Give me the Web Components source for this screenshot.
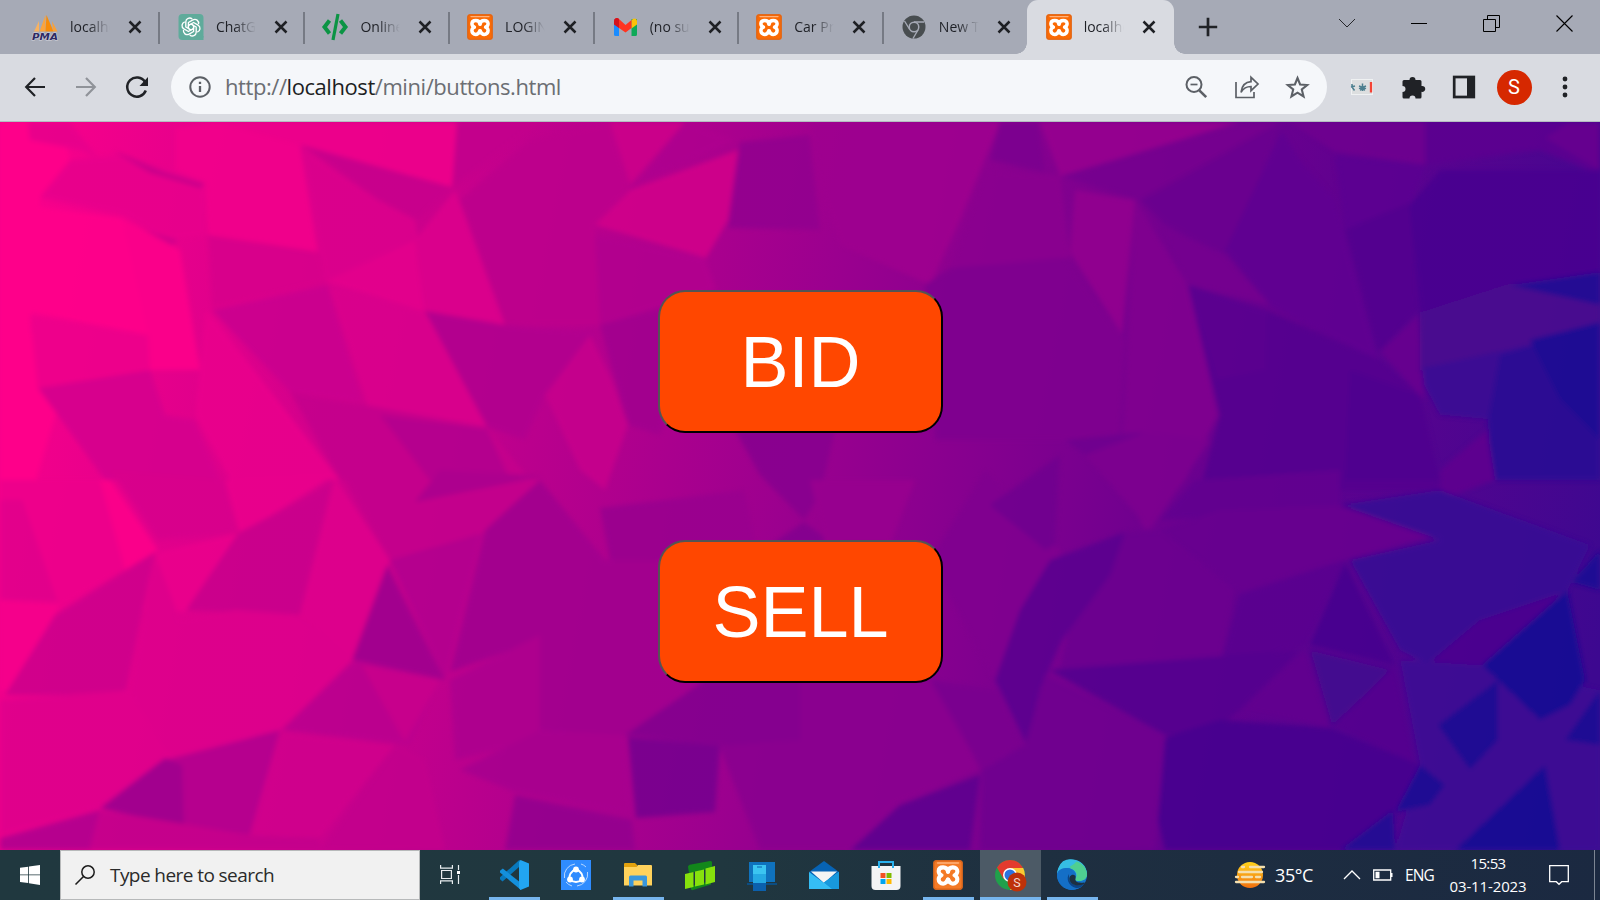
<!DOCTYPE html>
<html lang="en">
<head>
<meta charset="utf-8">
<title>Buttons</title>
<style>
html,body{margin:0;height:100%;overflow:hidden}
body{font-family:"Open Sans","Noto Sans",sans-serif}
</style>
</head>
<body>
<desktop-screen></desktop-screen>
<script>
const define = (name, html, ready) => customElements.define(name, class extends HTMLElement {
  connectedCallback() {
    if (this.shadowRoot) return;
    this.attachShadow({mode: 'open'}).innerHTML = typeof html === 'function' ? html(this) : html;
    if (ready) ready(this);
  }
});

/* Icons: name -> [viewBox size, markup] */
const xampp = `<rect x=".3" y=".3" width="25.4" height="25.4" rx="2.5" fill="#fb6a04"/><rect x=".8" y=".8" width="24.4" height="24.4" rx="2.2" fill="none" stroke="#d9641b"/><path d="M4 2.6h18" stroke="#ffb27c" stroke-width="1.4" stroke-linecap="round"/><path d="M13 10.300C12.600 7.500 11.200 6.400 8.800 6.400 6.300 6.400 4.900 7.800 4.900 9.800c0 1.700.9 2.700 2.500 3.400C5.600 14 4.900 15.200 4.900 16.600c0 2.200 1.500 3.900 3.900 3.900 2.200 0 3.200-1.500 4.200-3.700 1 2.200 2 3.700 4.200 3.700 2.400 0 3.900-1.700 3.900-3.900 0-1.400-.7-2.600-2.500-3.400 1.600-.7 2.500-1.700 2.500-3.400 0-2-1.400-3.400-3.900-3.400-2.400 0-3.800 1.100-4.200 3.900z" fill="none" stroke="#fff" stroke-width="3.500" stroke-linejoin="round"/><path d="M13 10v1.300M13 15.500V18" stroke="#fff" stroke-width="3"/>`;
const ICONS = {
  pma: [26, `<path d="M2 17.500L7 7v10.500z" fill="#f9b25f"/><path d="M7.500 17.500L13.500 1v16.500z" fill="#fba43d"/><path d="M14.500 1l7 16.500h-8z" fill="#f78c0a"/><path d="M20 7l5.500 10.500H21z" fill="#f9a13a"/><text x="0" y="25.600" font-family="DejaVu Sans" font-style="italic" font-weight="bold" font-size="9.300" textLength="26" lengthAdjust="spacingAndGlyphs" fill="#2e2a63" stroke="#d5d5de" stroke-width="1" paint-order="stroke">PMA</text>`],
  gpt: [26, `<rect x=".5" width="25" height="26" rx="4" fill="#5fab9b"/><path d="M21 26v-4h4.500v4z" fill="#5fab9b"/><g fill="none" stroke="#fff" stroke-width="1.350" stroke-linejoin="round">${[0,60,120,180,240,300].map(a=>`<path transform="rotate(${a} 13 13)" d="M10.400 14.500V8.500l4.500-2.600c3-1.600 6.300.9 5.600 4.200M10.400 11.500L13 10"/>`).join('')}</g>`],
  code: [26, `<g fill="none" stroke="#0b9444" stroke-width="4"><path d="M7.500 6.500L2.500 13l5 6.500M18.500 6.500l5 6.500-5 6.500"/><path d="M16 0L11 26" stroke-width="3.200"/></g>`],
  xampp: [26, xampp],
  gmail: [26, `<path d="M2 5h5v17H3.500A1.500 1.500 0 0 1 2 20.500z" fill="#1a8cff"/><path d="M19.500 5H25v15.500a1.500 1.500 0 0 1-1.500 1.500h-4z" fill="#0fa958"/><path d="M19.500 6.500C22 3 25 4.500 25 7.500v3l-5.500 4z" fill="#ffc107"/><path d="M2 8v-.5C2 4 5 3 7.500 5.500L13.500 11l6-5v8L13.500 18.500 7 14V14z" fill="#ff3420"/><path d="M2 7.500C2 4.500 5 3 7 5v9l-5-3.500z" fill="#d5121b"/>`],
  chromegray: [26, `<circle cx="13" cy="13" r="11.500" fill="#484d50"/><g stroke="#a6aab6" stroke-width="1.400" fill="none"><path d="M13 8h10M8.700 15.500L3.500 7M17.300 15.500L12 24.500"/></g><circle cx="13" cy="13" r="5.500" fill="#a6aab6"/><circle cx="13" cy="13" r="4" fill="#484d50"/>`],
  x: [14, `<path d="M1.500 1.500l11 11M12.500 1.500l-11 11" stroke="#1e2024" stroke-width="2.500"/>`],
  plus: [20, `<path d="M10 .8v18.400M.8 10h18.400" stroke="#202226" stroke-width="2.700"/>`],
  chev: [16, `<path d="M0 4l8 8 8-8" fill="none" stroke="#26272b" stroke-width="1"/>`],
  min: [16, `<path d="M0 8.500h16" stroke="#000" stroke-width="1"/>`],
  max: [17, `<path d="M.5 4.500h12v12H.5zM4.500 4.500v-4h12v12h-4" fill="none" stroke="#000"/>`],
  close: [17, `<path d="M.5.5l16 16M16.500.5l-16 16" stroke="#000" stroke-width="1.100"/>`],
  back: [20, `<path d="M20 10H1.500M10 1L1.200 10l8.800 9" fill="none" stroke="#202226" stroke-width="2.200"/>`],
  fwd: [20, `<path d="M0 10h18.500M10 1l8.800 9-8.800 9" fill="none" stroke="#909399" stroke-width="2.200"/>`],
  reload: [22, `<path d="M19.800 14.500A9.600 9.600 0 1 1 19 6" fill="none" stroke="#202226" stroke-width="2.500"/><path d="M22 1v9h-8.500z" fill="#202226"/>`],
  info: [22, `<circle cx="11" cy="11" r="9.700" fill="none" stroke="#5c6066" stroke-width="2"/><path d="M11 10v6M11 5.800v2.200" stroke="#5c6066" stroke-width="2.300"/>`],
  zoomout: [22, `<circle cx="9" cy="8.500" r="7.500" fill="none" stroke="#5c6066" stroke-width="2"/><path d="M14.300 14.300l6.900 6.900" stroke="#5c6066" stroke-width="2.600"/><path d="M5.500 8.500h7" stroke="#5c6066" stroke-width="1.700"/>`],
  share: [24, `<path d="M1 7v15.500h18V17" fill="none" stroke="#5c6066" stroke-width="1.700"/><path d="M6 17.300C7 10 10.500 7 16 6.700V2.300L23 9l-7 6.700v-4.200c-4.500 0-7.500 1.500-10 5.800z" fill="none" stroke="#5c6066" stroke-width="1.700"/>`],
  star: [22, `<path d="M11 1.900l2.500 6.200 6.800.5-5.200 4.300 1.700 6.700L11 16l-5.800 3.600 1.700-6.700L1.700 8.600l6.800-.5z" fill="none" stroke="#5c6066" stroke-width="2"/>`],
  ext: [22, `<rect x=".5" y="3.500" width="21" height="15" fill="#dcdedf" stroke="#eff1f2"/><g stroke="#4d7f8f" stroke-width="1.500"><path d="M11.500 7.500v7.500M8 10l7 2.600M15 10l-7 2.600M9.300 14.500l2.200-3.200 2.200 3.200M0 11l4-1M1 8v3l2.500 3.500" fill="none"/></g><path d="M20 6v10.500" stroke="#f44336" stroke-width="2.300"/>`],
  puzzle: [24, `<path d="M4 5h4.500a3 3 0 1 1 6 0H19q1.500 0 1.500 1.500V11a3 3 0 1 1 0 5.800V22q0 1.500-1.500 1.500h-4.500a3 3 0 0 0-6 0H3Q1.500 23.500 1.500 22v-5a3 3 0 0 0 0-6V6.500Q1.500 5 3 5z" fill="#202226"/>`],
  panel: [24, `<rect x="2.200" y="2" width="19.600" height="20" fill="none" stroke="#202226" stroke-width="2.700"/><path d="M15 2h7v20h-7z" fill="#202226"/>`],
  dots: [24, `<g fill="#202226"><circle cx="12" cy="4" r="2.400"/><circle cx="12" cy="12" r="2.400"/><circle cx="12" cy="20" r="2.400"/></g>`],
  win: [20, `<path d="M0 2.800L8.200 1.700v7.700H0zM9 1.600L20 0v9.400H9zM0 10.300h8.200V18L0 16.900zM9 10.300h11V20L9 18.200z" fill="#fff"/>`],
  search: [20, `<circle cx="13" cy="7" r="6.200" fill="none" stroke="#1c1c1c" stroke-width="1.500"/><path d="M8.500 11.500L.5 19.500" stroke="#1c1c1c" stroke-width="1.600"/>`],
  taskview: [20, `<g fill="none" stroke="#e8edef" stroke-width="1.200"><path d="M.6 0v3.200h11.800V0M.6 19v-3.200h11.800V19M1.600 5.500h9.800v8H1.600zM18.500 0v5M18.500 10v9"/></g><path d="M17 6h3v3h-3z" fill="#fff"/>`],
  vscode: [30, `<path d="M21 0l-1 7L3.500 21.500 1 19.300v-2L20 .3z" fill="#0879bd"/><path d="M1 10.700l2.800-2.200L22 23v7L1 12.500z" fill="#1490dc"/><path d="M21.500 0L30 3.500v23L21.500 30 20 28V2z" fill="#22a5f1"/>`],
  shareit: [30, `<path d="M0 0h30v30H0z" fill="#2f8cff"/><g fill="none" stroke="#b9d8ff" stroke-width="1"><path d="M3.500 18A12 12 0 0 1 14 4M26.500 12A12 12 0 0 1 16 26M5 22a12 12 0 0 0 6 4M25 7a12 12 0 0 0-5-3"/></g><path d="M15 9c-6 3-7 6-6.500 10.500C13 23 17 23 21.500 19.500 22 15 21 12 15 9z" fill="none" stroke="#fff" stroke-width="2"/><g fill="#fff"><circle cx="15" cy="9.500" r="2.900"/><circle cx="9" cy="19.500" r="2.900"/><circle cx="21" cy="19.500" r="2.900"/></g>`],
  folder: [30, `<path d="M1 4q0-1 1-1h10l2.500 2.500L13 9H1z" fill="#e2a10d"/><path d="M1 7h12.500l1.500-2h13q1 0 1 1v19.500H1z" fill="#ffd25c"/><path d="M6 26.500V17q0-1.500 1.500-1.500h15Q24 15.500 24 17v9.500h-4.500v-6h-9v6z" fill="#3a97dc"/>`],
  nox: [30, `<path d="M3 7Q3 5 6 4.500L25 1q2-.5 2 1.500v6L4 13zM6 26l20-5v3.500L8 30q-2 .5-2-1z" fill="#12871b"/><path d="M0 14l8.500-2v15L0 29zM10 11.500l9-2v15l-9 2zM20.500 8.500L30 6v16l-9.500 2.500z" fill="#86e10d"/>`],
  phone: [30, `<path d="M2 2h26v20H2z" fill="#0f72bd"/><path d="M0 25h30v-2H0z" fill="#0b4d82"/><path d="M6 5h13v22H6z" fill="#25a9e3"/><path d="M6 5h13v9H6z" fill="#3bc5f1"/><path d="M6 23h13v8H6z" fill="#0b60ad"/><path d="M10 7h5" stroke="#0b60ad"/>`],
  mail: [30, `<path d="M0 12L15 1l15 11v17H0z" fill="#0763b4"/><path d="M2 11.500h26L15 23z" fill="#f4f4f4"/><path d="M0 12l15 11L30 12v17H0z" fill="#35bdf4"/><path d="M15 22.500L30 12v17h-7z" fill="#169be0"/><path d="M15 22.500L23.500 29H30V12z" fill="#1898dc"/>`],
  store: [30, `<path d="M8 9V2h14v7" fill="none" stroke="#29b1ee" stroke-width="2"/><path d="M.5 6h29v20q0 4-4 4h-21q-4 0-4-4z" fill="#f4f4f5"/><path d="M8 6v2M22 6v2" stroke="#29b1ee" stroke-width="2"/><path d="M9.500 13h5v5h-5z" fill="#f25022"/><path d="M15.500 13h5v5h-5z" fill="#7fba00"/><path d="M9.500 19h5v5h-5z" fill="#00a4ef"/><path d="M15.500 19h5v5h-5z" fill="#ffb900"/>`],
  xampp30: [26, xampp.replace('#fb6a04','#f47a26')],
  chrome: [30, `<circle cx="15" cy="15" r="15" fill="#20a04b"/><path d="M15 15L2 7.500A15 15 0 0 1 28 7.500z" fill="#e33b2e"/><path d="M15 8h13.200A15 15 0 0 1 15 30l6.500-11.500z" fill="#fcc934"/><path d="M2 7.500L8.500 19 15 8z" fill="#e33b2e"/><circle cx="15" cy="15" r="7" fill="#fff"/><circle cx="15" cy="15" r="5.500" fill="#2b73e0"/><circle cx="22" cy="22" r="9.500" fill="#be3209"/><text x="22" y="26.500" text-anchor="middle" font-family="Roboto" font-size="12.500" fill="#f4d8cf">S</text>`],
  edge: [30, `<circle cx="15" cy="15" r="15" fill="#1576cc"/><path d="M0 15A15 15 0 0 1 30 14c0 5-4 7-8 7-3 0-4.500-1-3.500-2.500C21 15 18 8 11 8 5 8 1 11 0 15z" fill="#35b9e2"/><path d="M12 1A15 15 0 0 1 30 14c0 5-4 7-8 7-3 0-4.500-1-3.500-2.500 3-4 0-9-5-10z" fill="#4fcf91"/><path d="M6 1.200A15 15 0 0 1 20 1q-5 6-13 7-4 1-6 4a15 15 0 0 1 5-10.800z" fill="#36bde3"/><path d="M0 15c0-4 4-7 9-7 6 0 9.500 5 9.500 8-3-3-8 0-6 5 2 5 8 7 14 3.500A15 15 0 0 1 0 15z" fill="#146fc7"/><path d="M12 14c-3 4-1 12 7 14 3 .5 6-1 8-4-7 3-15 0-15-6z" fill="#0c4486"/><path d="M18.500 16c-3-3-7 0-6 4 1.500 5 8 7 14.500 4 1-.8 1-1.700 0-1.600-4 .8-9.500 0-8.500-3.600z" fill="#1d3041"/>`],
  sun: [30, `<defs><linearGradient id="s" x2="0" y2="1"><stop stop-color="#ffd21c"/><stop offset="1" stop-color="#f2700e"/></linearGradient></defs><circle cx="15" cy="15" r="13" fill="url(#s)"/><g stroke="#f4dfae" stroke-width="2.300" stroke-linecap="round"><path d="M7 7h2M15 7h14M4 12h23M7 17h10M21 17h4M1 22h28M1 17h2M10 22h14"/></g>`],
  caret: [16, `<path d="M0 12l8-8 8 8" fill="none" stroke="#fff" stroke-width="1.300"/>`],
  battery: [20, `<path d="M.7 5h17v10H.7z" fill="none" stroke="#fff" stroke-width="1.300"/><path d="M18 8h1.500v4H18zM2.500 6.700h4v6.600h-4z" fill="#fff"/>`],
  note: [20, `<path d="M.7.700h18.600v16h-6.600L10 19.300 7.300 16.700H.7z" fill="none" stroke="#fff" stroke-width="1.300"/>`]
};
define('ui-icon', el => {
  const [box, art] = ICONS[el.getAttribute('name')], s = el.getAttribute('size') || box;
  return `<style>:host{display:block;flex:none;width:${s}px;height:${s}px}svg{display:block;overflow:visible}</style><svg width="${s}" height="${s}" viewBox="0 0 ${box} ${box}">${art}</svg>`;
});

/* Text run whose letter spacing is adjusted to span a given width */
define('fit-text', `<style>:host{display:block;flex:none;white-space:pre}span{display:inline-block}</style><span><slot></slot></span>`, el => {
  const s = el.shadowRoot.querySelector('span');
  const n = el.textContent.length;
  s.style.letterSpacing = (el.getAttribute('width') - s.getBoundingClientRect().width) / n + 'px';
});

/* A slot of fixed width that centres its content */
define('icon-cell', el => `<style>:host{display:flex;flex:none;align-items:center;justify-content:center;width:${el.getAttribute('w')}px;height:100%}</style><slot></slot>`);

define('browser-tab', el => `<style>
:host{display:flex;box-sizing:border-box;flex:none;align-items:center;width:144.600px;height:54px;padding:0 0 0 17.500px;position:relative}
:host([first]){width:145.900px}
:host([last]){width:143.300px}
:host::after{content:"";position:absolute;right:-.5px;top:12px;width:2px;height:32px;background:#767a84}
:host([first])::after{right:.8px}
:host([last])::after,:host([active])::after{display:none}
.t{width:41px;margin-left:12px;overflow:hidden;white-space:nowrap;font-size:14px;line-height:20px;color:#1e2026;-webkit-mask:linear-gradient(90deg,#000 45%,transparent 97%)}
ui-icon+.t+ui-icon{margin-left:17px}
:host([active]){width:147px;padding-left:19px;background:#d9dbe1;border-radius:11px 11px 0 0}
:host([active]) .l,:host([active]) .r{position:absolute;bottom:0;width:11px;height:11px}
.l{left:-11px;background:radial-gradient(circle at 0 0,transparent 10.500px,#d9dbe1 11px)}
.r{right:-11px;background:radial-gradient(circle at 100% 0,transparent 10.500px,#d9dbe1 11px)}
</style><i class="l"></i><i class="r"></i><ui-icon name="${el.getAttribute('icon')}"></ui-icon><div class="t"><slot></slot></div><ui-icon name="x" size="14"></ui-icon>`);

define('tab-strip', `<style>
:host{display:flex;height:54px;background:#a6aab6;padding-left:14.500px;box-sizing:border-box}
.ctl{display:flex;margin-left:auto;height:46px}
</style>
<browser-tab icon="pma" first>localho</browser-tab><browser-tab icon="gpt">ChatGP</browser-tab><browser-tab icon="code">Online</browser-tab><browser-tab icon="xampp">LOGIN</browser-tab><browser-tab icon="gmail">(no sub</browser-tab><browser-tab icon="xampp">Car Pri</browser-tab><browser-tab icon="chromegray" last>New Ta</browser-tab><browser-tab icon="xampp" active>localho</browser-tab>
<icon-cell w="68"><ui-icon name="plus"></ui-icon></icon-cell>
<div class="ctl"><icon-cell w="73"><ui-icon name="chev"></ui-icon></icon-cell><icon-cell w="72"><ui-icon name="min"></ui-icon></icon-cell><icon-cell w="73"><ui-icon name="max"></ui-icon></icon-cell><icon-cell w="72"><ui-icon name="close"></ui-icon></icon-cell></div>`);

define('address-bar', `<style>
:host{display:flex;box-sizing:border-box;width:1156px;height:54px;border-radius:27px;background:#f5f7fa;align-items:center;padding:0 4px 0 3px}
fit-text{font-size:22px;line-height:30px;color:#6b6e73;margin:-2px auto 0 0}
b{font-weight:400;color:#1d1f23}
</style><icon-cell w="51"><ui-icon name="info"></ui-icon></icon-cell><fit-text width="336">http://<b>localhost</b>/mini/buttons.html</fit-text>
<icon-cell w="51"><ui-icon name="zoomout"></ui-icon></icon-cell><icon-cell w="51"><ui-icon name="share"></ui-icon></icon-cell><icon-cell w="51"><ui-icon name="star" size="23"></ui-icon></icon-cell>`);

define('tool-bar', `<style>
:host{display:flex;box-sizing:border-box;height:68px;background:#d9dbe1;border-bottom:1px solid #b4bcc0;padding:0 9px 1px;align-items:center}
.av{display:grid;place-items:center;width:35px;height:35px;border-radius:50%;background:#d62800;color:#fff;font:20px/35px Roboto,sans-serif}
address-bar{margin:0 9px 0 0}
</style>
<icon-cell w="51"><ui-icon name="back"></ui-icon></icon-cell><icon-cell w="51"><ui-icon name="fwd"></ui-icon></icon-cell><icon-cell w="51"><ui-icon name="reload"></ui-icon></icon-cell><span style="flex:none;width:9px"></span>
<address-bar></address-bar>
<icon-cell w="51"><ui-icon name="ext"></ui-icon></icon-cell><icon-cell w="51"><ui-icon name="puzzle"></ui-icon></icon-cell><icon-cell w="51"><ui-icon name="panel"></ui-icon></icon-cell><icon-cell w="50"><div class="av">S</div></icon-cell><icon-cell w="51"><ui-icon name="dots"></ui-icon></icon-cell>`);

/* Facets of the low-poly wallpaper: colour, then corner points */
const FACETS = `ff008a 0,122 60,122 70,160 40,197 30,330 60,400 0,600
e8008c 28,122 70,122 100,160 80,150 30,140
e8008c 40,197 70,160 120,155 175,170 205,182 205,235 165,240 125,215
f2008b 175,128 215,122 300,145 318,252 208,235 205,182 175,170
c8008c 112,150 165,172 205,184 200,188 150,173
d0008c 122,222 150,232 178,240 170,248 140,235
ee008b 215,122 457,122 452,187 300,145
c8008c 302,145 450,187 418,220 378,200
db008c 302,148 378,200 415,220 420,250 325,282 310,200
fc008a 122,218 180,250 200,370 150,370
ff008a 28,205 122,218 148,335 30,312
ee008b 30,315 148,335 150,370 38,388
e9008c 205,310 215,320 340,480 230,480 195,415
d8008b 208,235 318,252 325,282 212,308
cb008f 212,310 328,285 362,402 290,392
da008c 328,285 425,312 490,427 368,407
e4008c 325,282 415,240 425,312
dc008c 415,240 455,190 505,325 425,311
c3008c 457,122 540,122 452,188
bd008c 460,200 530,140 610,122 630,188 595,225 600,325 505,325
b2008f 425,311 505,325 598,332 545,395 525,440 487,427
c5008c 290,392 365,405 487,427 530,480 340,480
b4008f 380,415 487,429 510,480 430,480
d6008e 38,388 150,370 165,415 195,420 220,480 105,480
cc008a 610,122 685,122 630,185
ae008f 685,122 735,140 640,182
d0008a 595,225 630,190 738,150 728,220 706,258
93008f 740,142 810,135 820,230 728,228
9e008f 812,122 1000,122 960,220 930,285 840,245 820,190
b2008f 595,235 705,258 716,290 600,325
a2008f 600,325 700,296 660,435 628,425
c6008c 590,335 612,380 628,425 605,490 580,470 545,395
88008f 735,430 835,430 820,495 804,520 760,475
84008f 804,522 770,545 835,545
8a008f 985,170 1060,175 1070,258 950,270
7c008f 1000,122 1038,122 1045,172 990,160
7f008f 925,285 950,268 1065,258 1125,340 1120,434 1070,440 935,440
96008f 1040,122 1240,122 1060,176
76008f 1062,176 1240,124 1280,122 1140,200
92008f 1070,252 1075,190 1135,200 1122,335
80008f 1135,200 1188,285 1218,415 1185,480 1145,530 1120,480
6a008f 1140,200 1280,122 1260,180 1225,255 1165,225
74008f 1160,225 1225,255 1270,305 1188,285
600592 1282,130 1300,160 1335,200 1378,360 1270,305 1225,250
6e008f 1290,122 1430,122 1425,165 1335,152
5c0592 1335,155 1425,165 1410,205 1345,230
53008f 1345,230 1412,202 1418,310 1378,352
5c0590 1425,122 1600,122 1600,175 1540,150 1425,165
4a0590 1410,205 1440,170 1600,170 1600,272 1510,285 1420,315
68008f 1545,138 1570,122 1600,122 1600,170
55008f 1188,285 1268,311 1380,360 1420,395 1440,490 1200,490 1220,415
5a0590 1188,285 1268,311 1266,370 1217,380
50058f 1350,370 1420,395 1440,480 1345,480
67008f 1380,352 1418,315 1424,400
48078f 1420,312 1510,283 1600,303 1600,330 1530,345 1420,372
3a0894 1422,368 1530,345 1495,420 1440,415 1424,385
2c0a94 1500,355 1600,325 1600,480 1490,480 1488,420
200a94 1510,285 1600,272 1600,305
1e0a94 1530,340 1600,322 1600,440 1560,400
5f008f 1440,470 1487,430 1495,480 1440,500
70008f 1065,440 1145,432 1145,500 1085,455
98008f 810,480 915,480 890,545 825,545
80008f 985,470 1060,550 1045,680 1000,690 930,560
71008f 990,505 1060,455 1055,545 1045,550
7d008f 1085,455 1145,432 1210,440 1150,530
620590 1195,480 1340,470 1340,510 1160,520
68008f 1160,530 1220,510 1340,505 1440,535 1345,560 1240,592
6c008f 1125,532 1160,530 1235,590 1220,665 1060,670 1075,600
5c0590 1050,560 1125,532 1110,575 1062,640 1040,690 1027,745 995,680 1020,610
380a94 1340,505 1440,490 1590,545 1565,595 1480,665 1440,670 1400,650 1350,560 1440,540
4b058f 1480,620 1570,590 1480,670 1430,700 1420,670
5a0590 1240,595 1345,560 1305,645 1220,665
46058f 1345,563 1310,645 1395,665
54008f 1050,670 1300,650 1240,710 1225,722 1180,738 1165,735
62008f 1305,650 1330,728 1240,710
42078f 1310,650 1392,670 1332,726
54058f 1395,665 1415,765 1335,726
70008f 1045,675 1165,735 1155,850 980,850 982,770 1025,745
46058f 1165,738 1220,720 1330,728 1420,765 1395,810 1340,850 1165,850 1158,820
3e0894 1400,660 1480,665 1600,690 1600,850 1395,850 1420,765
180a94 1567,590 1585,680 1570,705 1540,720 1482,665
1c0a94 1498,680 1498,740 1470,770 1438,725
140a94 1545,765 1560,850 1455,850
1c0a94 1420,765 1445,785 1430,805 1395,812
200a94 1393,810 1395,850 1340,850
1c0a94 1572,582 1600,550 1600,590
1c0a94 1600,690 1565,740 1600,745
8a008f 800,680 935,680 980,770 895,805 850,850 760,850 720,748
7a008f 930,680 1000,690 1020,745 982,770
5f058f 980,775 970,850 850,850 900,805
ee008b 0,480 110,480 158,550 62,605 0,600
e2008c 0,500 22,500 58,602 0,600
fc008a 100,480 110,480 158,550 125,570
d8008c 110,470 225,480 236,533 158,540
ea008c 225,480 335,475 240,535
ca008c 238,533 330,485 300,615 235,612 185,610
df008c 335,478 390,560 352,662 300,615
ea008c 158,552 238,533 185,612 140,610
c4008c 345,480 540,480 480,535 390,560
ac008f 440,470 545,476 415,502
a0008f 387,565 445,680 352,660
b4008f 390,560 482,533 445,680
a2008f 485,530 540,480 605,560 660,560 700,680 628,737 540,730 540,640 450,672
ae008f 450,680 540,635 540,740 455,760
f6008b 0,600 60,605 10,690 0,690
cf008c 5,695 55,615 155,552 125,695
de008c 130,690 155,555 180,620 235,610 300,615 352,660 280,730 170,760
e0008c 0,700 130,690 170,755 100,808 0,835
bb008f 355,660 440,680 410,745 282,730
c8008c 362,665 440,680 405,742
b4008f 165,760 280,730 250,835 183,825
9e008f 100,808 165,758 182,765 184,828
d0008c 280,732 395,745 320,838 250,835
c3008c 395,745 425,760 445,850 320,850
a8008f 460,770 540,730 625,735 632,815 515,792
94008f 515,795 632,820 635,850 505,850
78008f 628,737 720,745 715,812 636,818
84008f 625,735 705,680 800,680 800,740 720,746
b3008f 0,838 100,810 90,850 0,850
c4008c 100,810 250,835 320,838 320,850 90,850
9a008f 600,508 745,490 758,560 610,560`.split('\n').map(r => {
  const i = r.indexOf(' ');
  return `<polygon fill="#${r.slice(0, i)}" points="${r.slice(i + 1)}"/>`;
}).join('');
define('poly-wallpaper', `<style>:host{display:block;position:absolute;inset:0;overflow:hidden;z-index:0}svg{display:block}</style>
<svg width="1600" height="728" viewBox="0 122 1600 728"><defs><linearGradient id="g" gradientUnits="userSpaceOnUse" x1="0" y1="330" x2="1600" y2="640"><stop stop-color="#f8008b"/><stop offset=".25" stop-color="#ca008c"/><stop offset=".5" stop-color="#9a008f"/><stop offset=".75" stop-color="#68008f"/><stop offset="1" stop-color="#3d0890"/></linearGradient><filter id="b" filterUnits="userSpaceOnUse" x="-20" y="100" width="1640" height="770"><feGaussianBlur stdDeviation="2.500"/></filter></defs>
<rect y="122" width="1600" height="728" fill="url(#g)"/><g filter="url(#b)" opacity=".93">${FACETS}</g></svg>`);

define('action-button', `<style>:host{display:block;width:285px;height:143px}
button{position:relative;display:block;box-sizing:border-box;width:100%;height:100%;margin:0;padding:0;background:#ff4700;color:#fff;border:2px solid;border-color:#545454 #000 #000 #545454;border-radius:27px;font:72px/1 "Liberation Sans",Arial,sans-serif}</style><button><slot></slot></button>`);

define('page-view', `<style>
:host{display:flex;box-sizing:border-box;position:relative;flex-direction:column;align-items:center;height:728px;padding:168px 0 0 1px;gap:107px}
action-button{position:relative}
</style><poly-wallpaper></poly-wallpaper><action-button>BID</action-button><action-button>SELL</action-button>`);

define('task-app', el => `<style>
:host{display:flex;box-sizing:border-box;flex:none;width:62px;height:50px;align-items:center;justify-content:center;position:relative}
:host([active]){background:linear-gradient(#4c5a66,#4c5a66) center/61px 100% no-repeat}
:host([open])::after{content:"";position:absolute;left:5.500px;right:5.500px;bottom:0;height:3px;background:#76b5ee}
:host([active])::after{left:.5px;right:.5px}
</style><ui-icon name="${el.getAttribute('icon')}" size="30"></ui-icon>`);

define('task-bar', `<style>
:host{display:flex;height:50px;background:linear-gradient(90deg,#20383f,#20373f 45%,#1e2f40 65%,#1b2941);align-items:center;color:#fff}
.s{display:flex;box-sizing:border-box;width:360px;height:50px;flex:none;align-items:center;border:1px solid #b7b9ba;background:#f1f1f1;padding-left:14px;color:#2a2a2a;font-size:19px}
.s fit-text{margin-left:15px}
.tv{margin:0 2px 0 -2px}
.w{width:38px;margin-left:10px;font-size:18px}
.e{width:30px;margin-left:12px;font-size:15.500px}
.clock{display:flex;flex-direction:column;align-items:center;width:78px;margin-left:14px;font-size:15px;line-height:23px;padding-bottom:1px}
.end{width:1px;height:50px;background:#7c8593;margin-left:25px}
</style>
<icon-cell w="60"><ui-icon name="win"></ui-icon></icon-cell>
<div class="s"><ui-icon name="search"></ui-icon><fit-text width="164">Type here to search</fit-text></div>
<icon-cell class="tv" w="63"><ui-icon name="taskview"></ui-icon></icon-cell>
<task-app icon="vscode" open></task-app><task-app icon="shareit"></task-app><task-app icon="folder" open></task-app><task-app icon="nox"></task-app><task-app icon="phone"></task-app><task-app icon="mail"></task-app><task-app icon="store"></task-app><task-app icon="xampp30" open></task-app><task-app icon="chrome" open active></task-app><task-app icon="edge" open></task-app>
<span style="width:132px;flex:none"></span><ui-icon name="sun"></ui-icon><div class="w"><fit-text width="38">35°C</fit-text></div>
<icon-cell w="77"><ui-icon name="caret"></ui-icon></icon-cell><span style="flex:none;width:0;margin-left:-17px"></span><ui-icon name="battery"></ui-icon><div class="e"><fit-text width="29">ENG</fit-text></div>
<div class="clock"><fit-text width="35">15:53</fit-text><fit-text width="77">03-11-2023</fit-text></div>
<ui-icon name="note" style="margin-left:22px"></ui-icon><div class="end"></div>`);

define('desktop-screen', `<style>:host{display:flex;flex-direction:column;width:1600px;height:900px;overflow:hidden}</style><tab-strip></tab-strip><tool-bar></tool-bar><page-view></page-view><task-bar></task-bar>`);
</script>
</body>
</html>
